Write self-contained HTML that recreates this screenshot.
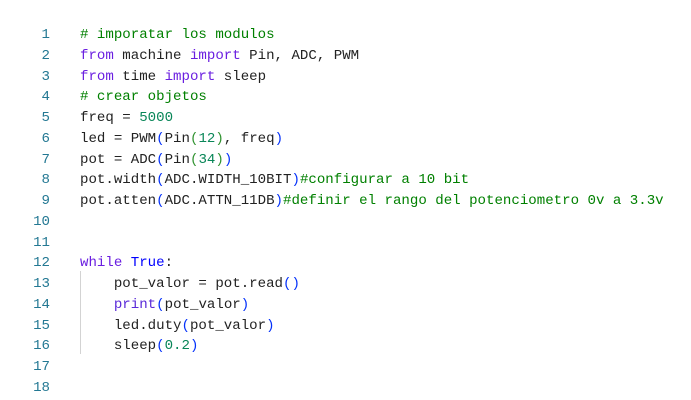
<!DOCTYPE html>
<html><head><style>
body{margin:0;background:#fff;width:691px;height:400px;overflow:hidden}
.c{position:absolute;top:25px;left:0;font-family:"Liberation Mono",monospace;font-size:14.1px;line-height:20.75px;color:#222}
.l{height:20.75px;white-space:pre;position:relative}
.n{display:inline-block;width:50px;text-align:right;color:#237893}
.t{position:absolute;left:80px;top:0}
.cm{color:#008000}.k{color:#6a1ee0}.b{color:#0000ff}.num{color:#098658}.p{color:#0431fa}.p2{color:#319331}.f{color:#5a2ad8}
.g{position:absolute;left:80px;top:271px;width:1px;height:83px;background:#d3d3d3}
</style></head><body>
<div class="g"></div>
<div class="c">
<div class="l"><span class="n">1</span><span class="t"><span class="cm"># imporatar los modulos</span></span></div>
<div class="l"><span class="n">2</span><span class="t"><span class="k">from</span> machine <span class="k">import</span> Pin, ADC, PWM</span></div>
<div class="l"><span class="n">3</span><span class="t"><span class="k">from</span> time <span class="k">import</span> sleep</span></div>
<div class="l"><span class="n">4</span><span class="t"><span class="cm"># crear objetos</span></span></div>
<div class="l"><span class="n">5</span><span class="t">freq = <span class="num">5000</span></span></div>
<div class="l"><span class="n">6</span><span class="t">led = PWM<span class="p">(</span>Pin<span class="p2">(</span><span class="num">12</span><span class="p2">)</span>, freq<span class="p">)</span></span></div>
<div class="l"><span class="n">7</span><span class="t">pot = ADC<span class="p">(</span>Pin<span class="p2">(</span><span class="num">34</span><span class="p2">)</span><span class="p">)</span></span></div>
<div class="l"><span class="n">8</span><span class="t">pot.width<span class="p">(</span>ADC.WIDTH_10BIT<span class="p">)</span><span class="cm">#configurar a 10 bit</span></span></div>
<div class="l"><span class="n">9</span><span class="t">pot.atten<span class="p">(</span>ADC.ATTN_11DB<span class="p">)</span><span class="cm">#definir el rango del potenciometro 0v a 3.3v</span></span></div>
<div class="l"><span class="n">10</span></div>
<div class="l"><span class="n">11</span></div>
<div class="l"><span class="n">12</span><span class="t"><span class="k">while</span> <span class="b">True</span>:</span></div>
<div class="l"><span class="n">13</span><span class="t">    pot_valor = pot.read<span class="p">()</span></span></div>
<div class="l"><span class="n">14</span><span class="t">    <span class="f">print</span><span class="p">(</span>pot_valor<span class="p">)</span></span></div>
<div class="l"><span class="n">15</span><span class="t">    led.duty<span class="p">(</span>pot_valor<span class="p">)</span></span></div>
<div class="l"><span class="n">16</span><span class="t">    sleep<span class="p">(</span><span class="num">0.2</span><span class="p">)</span></span></div>
<div class="l"><span class="n">17</span></div>
<div class="l"><span class="n">18</span></div>
</div>
</body></html>
